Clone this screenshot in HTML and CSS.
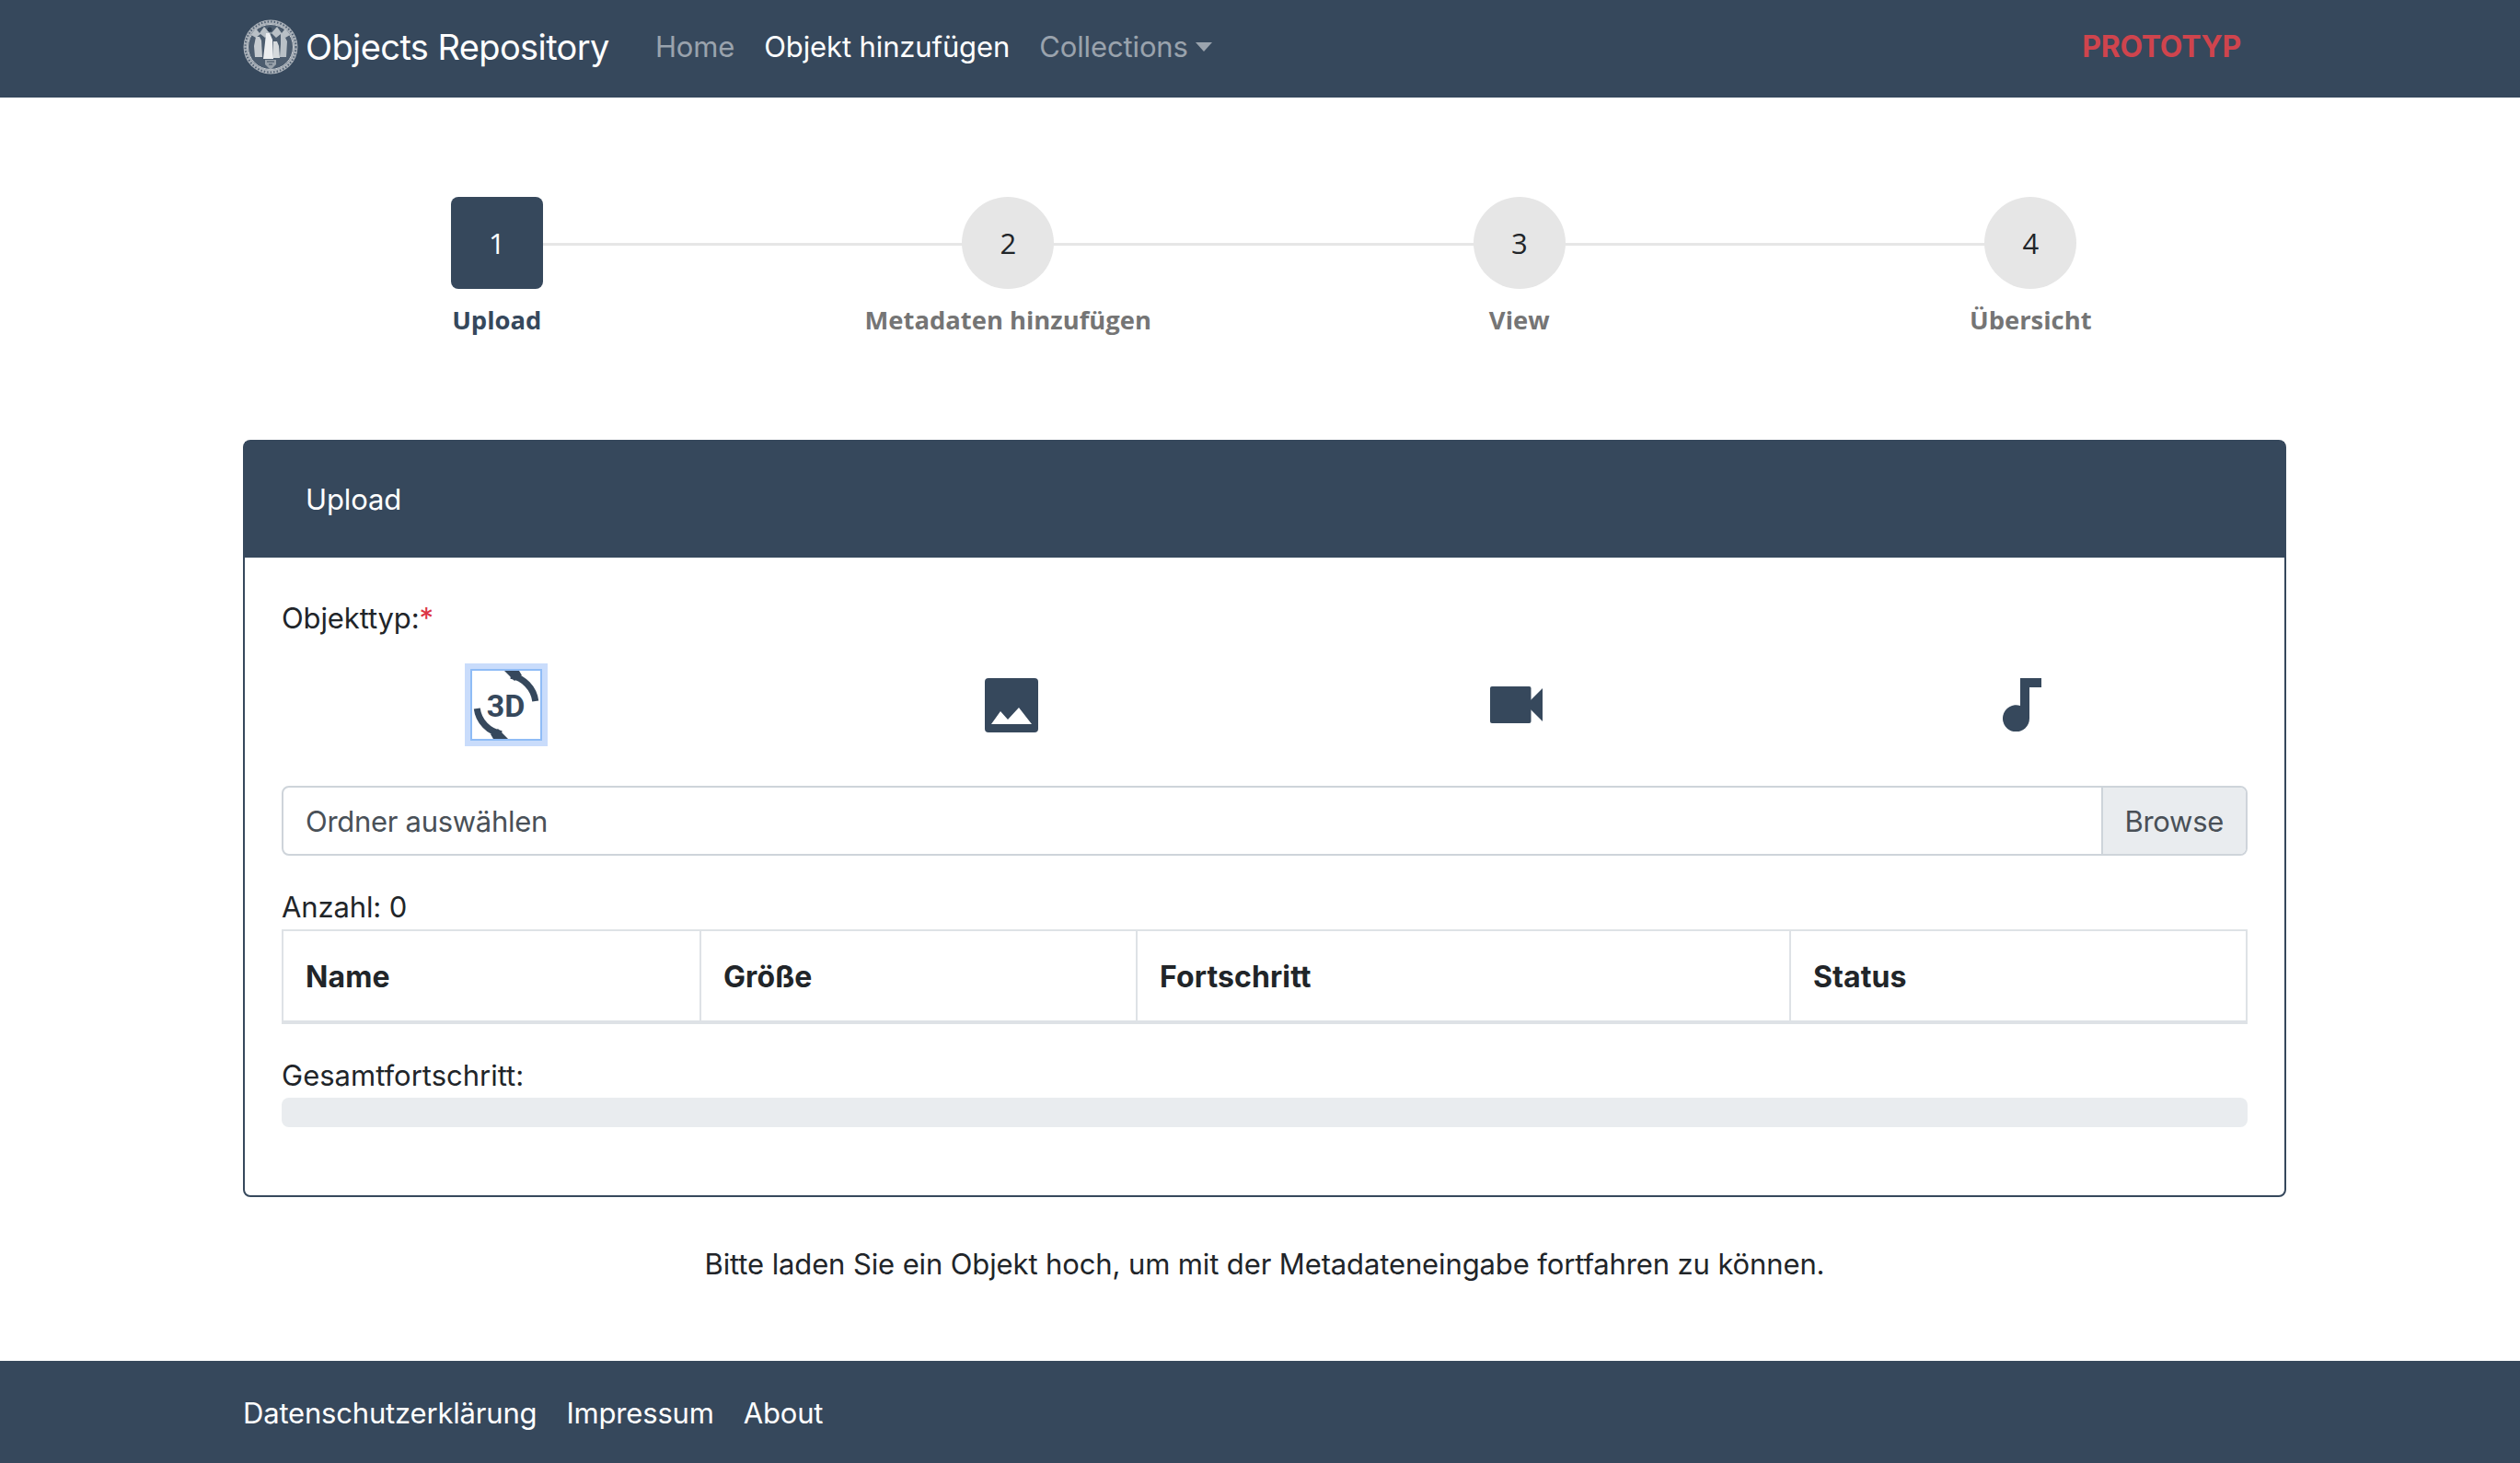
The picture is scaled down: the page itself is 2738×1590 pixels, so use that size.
FILE: index.html
```html
<!DOCTYPE html>
<html lang="de">
<head>
    <meta charset="UTF-8">
    <meta name="viewport" content="width=device-width, initial-scale=1.0">
    <title>Objects Repository</title>
    <link rel="stylesheet" href="styles.css">
</head>
<body>
    <nav class="navbar">
        <div class="container navbar-inner">
            <a class="brand">
                <svg class="brand-logo" viewBox="0 0 60 60">
                    <circle cx="30" cy="30" r="29.5" fill="#aab1b9"/>
                    <circle cx="30" cy="30" r="27.5" fill="none" stroke="#4f5f71" stroke-width="2" stroke-dasharray="1.5 2"/>
                    <circle cx="30" cy="30" r="25" fill="#4c5c6e"/>
                    <circle cx="30" cy="30" r="24.5" fill="none" stroke="#c9ced3" stroke-width="1"/>
                    <path d="M9 17l5-7 4 5 5-7 7 8 7-8 5 7 4-5 5 7-5 3-5-4-5 4-6-6-6 6-5-4-5 4z" fill="#b9c0c6"/>
                    <circle cx="29" cy="11" r="2.5" fill="#2f3f51"/>
                    <path d="M14 19h4l2 4 1 18h-8l-1-12z" fill="#c6cbd0"/>
                    <path d="M25 15h4l3 7 1 21H22l2-18z" fill="#eceef0"/>
                    <path d="M33 24h4l2 5 1 13h-7z" fill="#d5d9dc"/>
                    <path d="M41 16h3l4 8-1 17h-7l1-14z" fill="#b9c0c6"/>
                    <path d="M24 44h12v5l-6 6-6-6z" fill="#98a1aa"/>
                    <path d="M26 46h8M28 49h4" stroke="#3c4c5e" stroke-width="1"/>
                </svg>
                <span>Objects Repository</span>
            </a>
            <ul class="nav-links">
                <li><a class="nav-link">Home</a></li>
                <li><a class="nav-link active">Objekt hinzufügen</a></li>
                <li><a class="nav-link dropdown-toggle">Collections</a></li>
            </ul>
            <span class="prototype">PROTOTYP</span>
        </div>
    </nav>

    <main class="container">
        <ol class="stepper">
            <li class="step current"><span class="step-num">1</span><span class="step-label">Upload</span></li>
            <li class="step"><span class="step-num">2</span><span class="step-label">Metadaten hinzufügen</span></li>
            <li class="step"><span class="step-num">3</span><span class="step-label">View</span></li>
            <li class="step"><span class="step-num">4</span><span class="step-label">Übersicht</span></li>
        </ol>

        <section class="card">
            <header class="card-header">Upload</header>
            <div class="card-body">
                <div class="type-label">Objekttyp:<span class="required">*</span></div>
                <div class="type-row">
                    <button class="type-btn selected">
                        <svg viewBox="0 0 74 74" width="74" height="74">
                            <path class="ring" d="M42 5.4A32 32 0 0 1 68.75 33"/>
                            <path class="fill" d="M35 0H51L54 5L46 11z"/>
                            <path class="ring" d="M5.25 41A32 32 0 0 0 32 68.6"/>
                            <path class="fill" d="M39 74H23L20 69L28 63z"/>
                            <text x="36.5" y="50" class="glyph-3d" text-anchor="middle">3D</text>
                        </svg>
                    </button>
                    <button class="type-btn">
                        <svg viewBox="0 0 58 59" width="58" height="59">
                            <rect width="58" height="59" rx="4" fill="#36485c"/>
                            <path d="M7 50L17 36L25 45L37 32L51 50z" fill="#fff"/>
                        </svg>
                    </button>
                    <button class="type-btn">
                        <svg viewBox="0 0 57 40" width="57" height="40">
                            <rect width="44.5" height="40" rx="2" fill="#36485c"/>
                            <path d="M44 15L57 2V38L44 25z" fill="#36485c"/>
                        </svg>
                    </button>
                    <button class="type-btn">
                        <svg viewBox="0 0 42 58" width="42" height="58">
                            <path d="M19 0H42V10H29V43.5A14.5 14.5 0 1 1 19 30z" fill="#36485c"/>
                        </svg>
                    </button>
                </div>

                <div class="file-input">
                    <span class="file-text">Ordner auswählen</span>
                    <span class="file-browse">Browse</span>
                </div>

                <div class="count">Anzahl: 0</div>
                <table class="file-table">
                    <thead>
                        <tr>
                            <th class="col-name">Name</th>
                            <th class="col-size">Größe</th>
                            <th class="col-progress">Fortschritt</th>
                            <th>Status</th>
                        </tr>
                    </thead>
                </table>

                <div class="total-label">Gesamtfortschritt:</div>
                <div class="progress"></div>
            </div>
        </section>

        <p class="hint">Bitte laden Sie ein Objekt hoch, um mit der Metadateneingabe fortfahren zu können.</p>
    </main>

    <footer class="footer">
        <div class="container footer-inner">
            <a>Datenschutzerklärung</a>
            <a>Impressum</a>
            <a>About</a>
        </div>
    </footer>
</body>
</html>
```
FILE: styles.css
```css
* {
    box-sizing: border-box;
}
html, body {
    height: 100%;
}
body {
    margin: 0;
    display: flex;
    flex-direction: column;
    min-height: 1590px;
    font-family: Inter, "Noto Sans", sans-serif;
    font-size: 31px;
    letter-spacing: -0.12px;
    line-height: 48px;
    color: #212529;
    background: #fff;
}
.container {
    width: 2220px;
    margin-left: 264px;
}

/* navbar */
.navbar {
    height: 106px;
    background: #36485c;
    flex: none;
}
.navbar-inner {
    display: flex;
    align-items: center;
    height: 106px;
    padding-bottom: 5px;
}
.brand {
    display: flex;
    align-items: center;
    color: #fff;
    font-size: 38px;
    letter-spacing: -0.6px;
    margin-right: 50px;
}
.brand-logo {
    width: 60px;
    height: 60px;
    margin-right: 8px;
}
.nav-links {
    display: flex;
    gap: 32px;
    list-style: none;
    margin: 0;
    padding: 0;
}
.nav-link {
    color: rgba(255, 255, 255, 0.5);
}
.nav-link.active {
    color: #fff;
}
.dropdown-toggle::after {
    content: "";
    display: inline-block;
    margin-left: 8px;
    vertical-align: 6px;
    border-top: 10px solid;
    border-left: 9px solid transparent;
    border-right: 9px solid transparent;
}
.prototype {
    margin-left: auto;
    margin-right: 49px;
    color: #cf444d;
    font-size: 32px;
    font-weight: 700;
    letter-spacing: -0.3px;
}

/* stepper */
.stepper {
    display: grid;
    grid-template-columns: repeat(4, 1fr);
    list-style: none;
    margin: 108px 0 0 -2px;
    padding: 0;
    font-family: "Open Sans", sans-serif;
    letter-spacing: 0;
}
.step {
    position: relative;
    display: flex;
    flex-direction: column;
    align-items: center;
}
.step:not(:last-child)::after {
    content: "";
    position: absolute;
    top: 50px;
    left: 50%;
    width: 100%;
    height: 3px;
    background: #e6e6e6;
}
.step-num {
    position: relative;
    z-index: 1;
    width: 100px;
    height: 100px;
    display: flex;
    align-items: center;
    justify-content: center;
    border-radius: 50%;
    background: #e6e6e6;
}
.step-label {
    margin-top: 10px;
    font-weight: 700;
    font-size: 27.4px;
    color: #757575;
}
.step.current .step-num {
    border-radius: 8px;
    background: #36485c;
    color: #fff;
}
.step.current .step-label {
    color: #36485c;
}

/* card */
.card {
    margin-top: 106px;
    height: 823px;
    border: 2px solid #36485c;
    border-radius: 8px;
}
.card-header {
    height: 126px;
    padding: 39px 66px;
    background: #36485c;
    color: #fff;
}
.card-body {
    padding: 42px 40px 40px;
}
.required {
    color: #dc3545;
}
.type-row {
    display: grid;
    grid-template-columns: repeat(4, 1fr);
    margin: 25px -29px 0 -31px;
    height: 90px;
}
.type-btn {
    display: flex;
    align-items: center;
    justify-content: center;
    padding: 0;
    border: 0;
    background: none;
}
.type-btn.selected svg {
    box-sizing: content-box;
    border: 2px solid #8fbcf6;
    outline: 6px solid #c9dcfb;
}
.ring {
    fill: none;
    stroke: #36485c;
    stroke-width: 7;
}
.fill {
    fill: #36485c;
}
.glyph-3d {
    font-family: Roboto, sans-serif;
    font-size: 34px;
    font-weight: 700;
    letter-spacing: 0;
    fill: #36485c;
}

/* file input */
.file-input {
    display: flex;
    margin-top: 43px;
    height: 76px;
    border: 2px solid #ced4da;
    border-radius: 8px;
    overflow: hidden;
    color: #495057;
}
.file-text {
    flex: 1;
    padding: 13px 24px 11px;
    letter-spacing: -0.3px;
}
.file-browse {
    padding: 13px 24px 11px;
    background: #e9ecef;
    border-left: 2px solid #ced4da;
    letter-spacing: -0.3px;
}

/* table */
.count {
    margin-top: 30px;
    padding-top: 2px;
}
.file-table {
    width: 100%;
    border-collapse: collapse;
    table-layout: fixed;
    border: 2px solid #dee2e6;
}
.file-table th {
    height: 100px;
    padding: 3px 24px 0;
    text-align: left;
    font-size: 32px;
    letter-spacing: 0.1px;
    border: 2px solid #dee2e6;
    border-bottom-width: 4px;
}
.col-name {
    width: 454px;
}
.col-size {
    width: 474px;
}
.col-progress {
    width: 710px;
}
.total-label {
    margin-top: 30px;
    padding-top: 2px;
    letter-spacing: 0;
}
.progress {
    height: 32px;
    border-radius: 8px;
    background: #e9ecef;
}

.hint {
    margin: 49px 0 0;
    text-align: center;
}

/* footer */
.footer {
    margin-top: auto;
    height: 111px;
    background: #36485c;
    flex: none;
}
.footer-inner {
    display: flex;
    align-items: center;
    gap: 32px;
    height: 111px;
    padding-top: 2px;
    letter-spacing: -0.18px;
    color: #fff;
}
```
